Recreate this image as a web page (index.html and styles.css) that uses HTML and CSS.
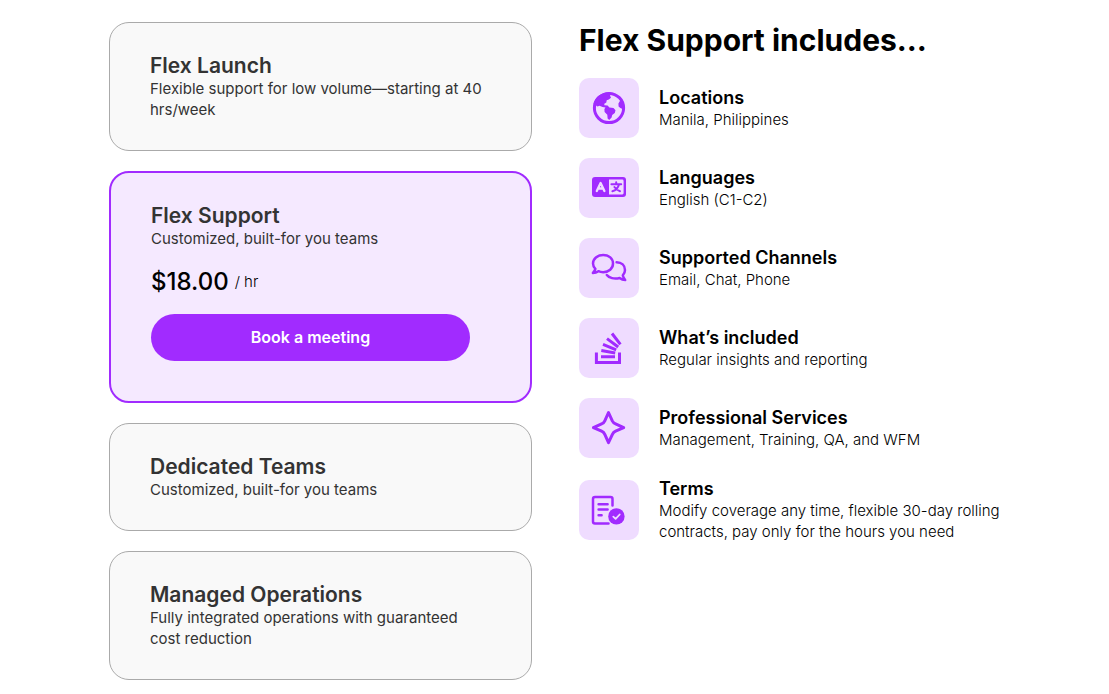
FILE: index.html
```html
<!DOCTYPE html>
<html lang="en">
<head>
  <meta charset="UTF-8">
  <meta name="viewport" content="width=device-width, initial-scale=1.0">
  <title>Flex Support</title>
  <link rel="stylesheet" href="styles.css">
</head>
<body>
  <main class="pricing">
    <div class="plans">
      <section class="plan">
        <h3>Flex Launch</h3>
        <p>Flexible support for low volume—starting at 40 hrs/week</p>
      </section>

      <section class="plan active">
        <h3>Flex Support</h3>
        <p>Customized, built-for you teams</p>
        <div class="price"><span class="amount">$18.00</span><span>/ hr</span></div>
        <button class="book-button" type="button">Book a meeting</button>
      </section>

      <section class="plan">
        <h3>Dedicated Teams</h3>
        <p>Customized, built-for you teams</p>
      </section>

      <section class="plan">
        <h3>Managed Operations</h3>
        <p>Fully integrated operations with guaranteed cost reduction</p>
      </section>
    </div>

    <section class="includes">
      <h2>Flex Support includes…</h2>
      <ul class="features">
        <li class="feature">
          <svg class="feature-icon" viewBox="0 0 60 60" aria-hidden="true">
            <circle class="line" cx="30" cy="30" r="14.6"/>
            <path class="solid" d="M14.5 26C16 19 23 13.6 32 14.6L31 17.5L32 19.8L29.8 21.6L27.7 22.2L27.3 24.4L25.3 25.8L25.4 27.2L28.6 27.6L30.4 29.4L34.5 30L36.5 32.2L35.8 35L33.2 37L32.6 39.6L30.2 42L28.6 40.4L28.3 36.8L25.6 34L25.4 31L26.5 29.6L23.5 29L20.5 27.8L18.5 28.6L16.3 27Z"/>
            <path class="solid" d="M42.8 22.2L40.5 23.6L39.4 25.8L39.6 28.4L41.3 30L44.8 31.4V25Z"/>
          </svg>
          <div>
            <h4>Locations</h4>
            <p>Manila, Philippines</p>
          </div>
        </li>
        <li class="feature">
          <svg class="feature-icon" viewBox="0 0 60 60" aria-hidden="true">
            <rect class="solid" x="13" y="19" width="34" height="20" rx="3"/>
            <path class="cutout" d="M30 21.6H43.3Q44.6 21.6 44.6 23V35Q44.6 36.4 43.3 36.4H30Z"/>
            <path class="letter-line" d="M17.8 33L21.6 25L25.4 33M19.2 30.5H24"/>
            <path class="glyph-line" d="M32.4 26.2H42.2M37.2 24.2V26.2M40 26.4C39 30 36.5 32.4 33.4 33.2M35.4 29C36.8 31 38.6 32.4 41 33.2"/>
          </svg>
          <div>
            <h4>Languages</h4>
            <p>English (C1-C2)</p>
          </div>
        </li>
        <li class="feature">
          <svg class="feature-icon" viewBox="0 0 60 60" aria-hidden="true">
            <path class="thin" d="M24.2 17C30 17 34 20.6 34 25.6C34 30.6 29.8 34.2 24.2 34.2C22.4 34.2 20.8 33.9 19.4 33.2C18 34.2 16 34.9 13.9 34.9C15.3 33.5 16.2 32 16.4 30.8C14.9 29.4 14 27.6 14 25.6C14 20.6 18.4 17 24.2 17Z"/>
            <path class="thin" d="M37.6 24.2C42.6 24.2 46 27.4 46 32C46 34.2 45.2 36 43.8 37.4C44 38.8 44.9 40.4 46.2 42C44.2 42 42.2 41.2 40.6 40C35.4 41.4 30 40 27.8 37"/>
          </svg>
          <div>
            <h4>Supported Channels</h4>
            <p>Email, Chat, Phone</p>
          </div>
        </li>
        <li class="feature">
          <svg class="feature-icon" viewBox="0 0 60 60" aria-hidden="true">
            <path class="line square" d="M17.4 34.4V44.5H40.5V34.4M22 38.7H36M22.3 32.6L36.2 35M24 26.4L37.2 31.8M28 20.6L39.2 29M33 15.5L41.4 26.4"/>
          </svg>
          <div>
            <h4>What’s included</h4>
            <p>Regular insights and reporting</p>
          </div>
        </li>
        <li class="feature">
          <svg class="feature-icon" viewBox="0 0 60 60" aria-hidden="true">
            <path class="line" d="M29.5 14.5L33.3 22.8Q34.4 25 36.6 25.9L44.7 29.6L36.6 33.2Q34.4 34.2 33.4 36.4L29.5 44.6L25.8 36.4Q24.8 34.2 22.6 33.2L14.4 29.6L22.6 25.9Q24.8 25 25.8 22.8Z"/>
          </svg>
          <div>
            <h4>Professional Services</h4>
            <p>Management, Training, QA, and WFM</p>
          </div>
        </li>
        <li class="feature">
          <svg class="feature-icon" viewBox="0 0 60 60" aria-hidden="true">
            <path class="thin" d="M33.5 25.6V19Q33.5 17 31.5 17H16Q14 17 14 19V41.5Q14 43.5 16 43.5H29.5M19.6 24.2H28.6M19.6 29.6H28.6M19.6 35.2H22.6"/>
            <circle class="solid" cx="37.4" cy="36.4" r="8.2"/>
            <path class="check" d="M34.3 36.7L36.6 38.9L40.7 34.5"/>
          </svg>
          <div>
            <h4>Terms</h4>
            <p>Modify coverage any time, flexible 30-day rolling contracts, pay only for the hours you need</p>
          </div>
        </li>
      </ul>
    </section>
  </main>
</body>
</html>
```
FILE: styles.css
```css
* {
  box-sizing: border-box;
}

body {
  margin: 0;
  background: #fff;
  color: #000;
  font-family: Inter, "Liberation Sans", sans-serif;
  font-size: 15px;
  line-height: 21px;
}

h2, h3, h4, p, ul {
  margin: 0;
  padding: 0;
}

.pricing {
  display: grid;
  grid-template-columns: 9fr 10fr;
  gap: 47px;
  padding: 22px 60px 14px 109px;
}

/* PLAN CARDS */
.plans {
  display: flex;
  flex-direction: column;
  gap: 20px;
}

.plan {
  padding: 30px 40px;
  background: #f9f9f9;
  border: 1px solid #aaa;
  border-radius: 20px;
  color: #333;
}

.plan.active {
  padding-bottom: 40px;
  background: #f5e9ff;
  border: 2px solid #a12bff;
}

.plan h3 {
  font-size: 21px;
  font-weight: 600;
  line-height: 25px;
}

.price {
  display: flex;
  align-items: center;
  gap: 6px;
  margin: 16px 0;
  color: #000;
  font-weight: 300;
}

.amount {
  font-size: 24px;
  font-weight: 500;
  line-height: 33px;
}

.book-button {
  display: block;
  width: calc(100% - 20px);
  padding: 13px 20px;
  background: #a12bff;
  border: none;
  border-radius: 24px;
  color: #fff;
  font: 600 16px/21px Inter, "Liberation Sans", sans-serif;
  cursor: pointer;
}

/* INCLUDED FEATURES */
.includes h2 {
  font-size: 30px;
  font-weight: 700;
  line-height: 36px;
}

.features {
  display: flex;
  flex-direction: column;
  gap: 20px;
  margin-top: 20px;
  list-style: none;
}

.feature {
  display: flex;
  align-items: center;
  gap: 20px;
}

.feature h4 {
  font-size: 18px;
  font-weight: 600;
  line-height: 22px;
}

.feature p {
  font-weight: 300;
}

.feature-icon {
  flex: none;
  width: 60px;
  height: 60px;
  background: #efdcff;
  border-radius: 10px;
  fill: none;
  stroke-linecap: round;
  stroke-linejoin: round;
}

.solid {
  fill: #a12bff;
}

.cutout {
  fill: #efdcff;
}

.line {
  stroke: #a12bff;
  stroke-width: 3;
}

.square {
  stroke-linecap: butt;
  stroke-linejoin: miter;
}

.thin {
  stroke: #a12bff;
  stroke-width: 2.5;
}

.letter-line {
  stroke: #efdcff;
  stroke-width: 2.3;
}

.glyph-line {
  stroke: #a12bff;
  stroke-width: 2;
}

.check {
  stroke: #efdcff;
  stroke-width: 1.8;
}
```
